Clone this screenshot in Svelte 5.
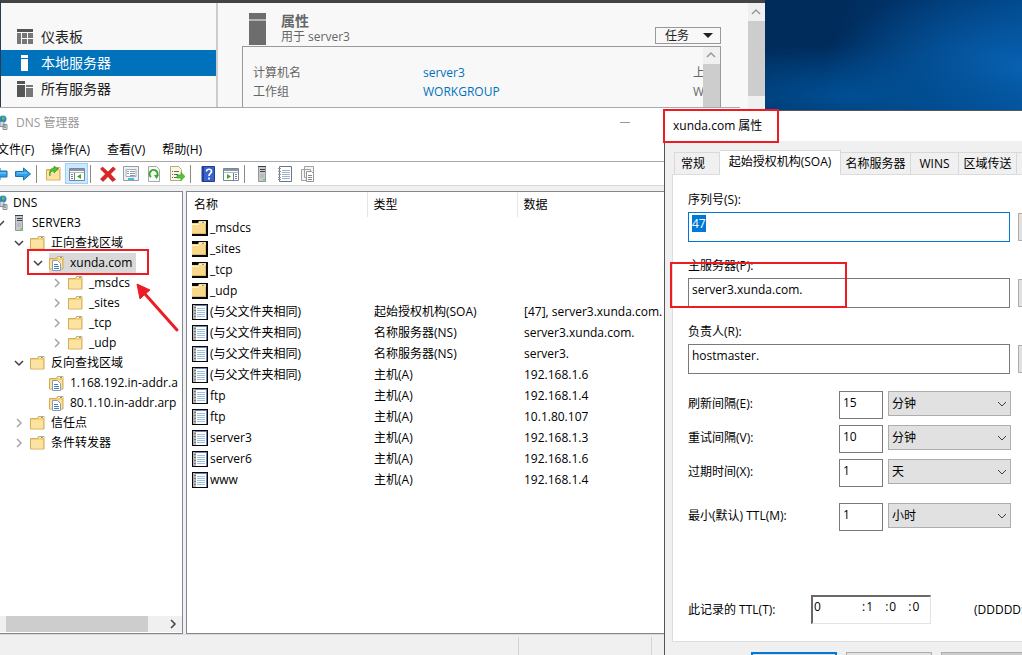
<script lang="ts">
	import { onMount } from 'svelte';

	let serial: HTMLInputElement;

	const tree = [
		{ level: 0, icon: 'dns', name: 'DNS' },
		{ level: 1, icon: 'server', name: 'SERVER3', open: true },
		{ level: 2, icon: 'folder', name: '正向查找区域', open: true },
		{ level: 3, icon: 'zone', name: 'xunda.com', open: true, selected: true },
		{ level: 4, icon: 'folder', name: '_msdcs', open: false },
		{ level: 4, icon: 'folder', name: '_sites', open: false },
		{ level: 4, icon: 'folder', name: '_tcp', open: false },
		{ level: 4, icon: 'folder', name: '_udp', open: false },
		{ level: 2, icon: 'folder', name: '反向查找区域', open: true },
		{ level: 3, icon: 'zone', name: '1.168.192.in-addr.a' },
		{ level: 3, icon: 'zone', name: '80.1.10.in-addr.arp' },
		{ level: 2, icon: 'folder', name: '信任点', open: false },
		{ level: 2, icon: 'folder', name: '条件转发器', open: false }
	];

	const records = [
		['_msdcs', '', ''],
		['_sites', '', ''],
		['_tcp', '', ''],
		['_udp', '', ''],
		['(与父文件夹相同)', '起始授权机构(SOA)', '[47], server3.xunda.com.'],
		['(与父文件夹相同)', '名称服务器(NS)', 'server3.xunda.com.'],
		['(与父文件夹相同)', '名称服务器(NS)', 'server3.'],
		['(与父文件夹相同)', '主机(A)', '192.168.1.6'],
		['ftp', '主机(A)', '192.168.1.4'],
		['ftp', '主机(A)', '10.1.80.107'],
		['server3', '主机(A)', '192.168.1.3'],
		['server6', '主机(A)', '192.168.1.6'],
		['www', '主机(A)', '192.168.1.4']
	];

	const tools = [
		'back', 'forward', '|', 'up', 'console', '|', 'delete', 'props', 'refresh', 'export',
		'|', 'help', 'view', '|', 'server', 'book', 'copy'
	];

	const intervals = [
		{ id: 'refresh', label: '刷新间隔(E):', value: '15', unit: '分钟' },
		{ id: 'retry', label: '重试间隔(V):', value: '10', unit: '分钟' },
		{ id: 'expire', label: '过期时间(X):', value: '1', unit: '天' },
		{ id: 'minimum', label: '最小(默认) TTL(M):', value: '1', unit: '小时' }
	];

	const tabs = ['常规', '起始授权机构(SOA)', '名称服务器', 'WINS', '区域传送', ''];

	onMount(() => {
		serial.focus();
		serial.select();
	});
</script>

{#snippet icon(name: string)}
	<svg class="icon" viewBox="0 0 16 16" width="16" height="16" aria-hidden="true">
		{#if name === 'folder' || name === 'zone' || name === 'up'}
			<path d="M.5 3.500h7l1-2h5.500v12.500H.5z" fill="#f3d07c" stroke="#d3ad5c" />
			<path d="M9 2.500h5" stroke="#fff4cf" />
			<path d="M11 2.500h2" stroke="#5b9bd5" />
			<path d="M1 5h12v8.500H1z" fill="#fce3a0" />
			{#if name === 'zone'}
				<path d="M3.500 5.500h5l3 3v7h-8z" fill="#fff" stroke="#8f9bb0" />
				<path d="M5 9.500h4M5 11.500h5M5 13.500h5" stroke="#3a80c8" />
			{:else if name === 'up'}
				<path d="M4 10c0-4 1-5 4-5V7l4-4-4-3v2C4 2 3 6 4 10z" fill="#4fc22c" stroke="#238a16" stroke-width=".6" />
			{/if}
		{:else if name === 'dns'}
			<circle cx="11" cy="4" r="3.500" fill="#2e86c8" />
			<path d="M10 1l3 1.500-1 3L10 4z" fill="#52c152" />
			<path d="M8 6.500h4v5H8zM3 9.500h4v5H3zM11 9.500h4v5h-4z" fill="#d8dde2" stroke="#737d87" stroke-width=".8" />
			<path d="M4 11h2M4 12.500h2M12 11h2M12 12.500h2" stroke="#5d6770" stroke-width=".6" />
		{:else if name === 'server'}
			<path d="M4.500.5h7v15h-7z" fill="#c6cacd" stroke="#92979b" />
			<path d="M4 .5h8M6 3.500h5M6 5.500h5" stroke="#3b4146" />
			<path d="M6 9h4M6 11h4" stroke="#a8adb1" />
			<path d="M9 13h2v1.500H9z" fill="#5fe04a" />
		{:else if name === 'back'}
			<path d="M8 2v3h7v6H8v3L1 8z" fill="#2f9fe6" stroke="#1671b5" />
			<path d="M5 7h9" stroke="#8bd3fa" />
		{:else if name === 'forward'}
			<path d="M8.500 2v3.500h-8v5h8V14l7-6z" fill="#2f9fe6" stroke="#1671b5" />
			<path d="M2 7h10" stroke="#8bd3fa" />
		{:else if name === 'console' || name === 'view'}
			<path d="M.5 2.500h15v12H.5z" fill="#fff" stroke="#7b8794" />
			<path d="M1 3h14v2H1z" fill="#8a96a3" />
			<path d="M1 6.500h14" stroke="#b0b8c0" />
			{#if name === 'console'}
				<path d="M5.500 7v7M2 8.500h2M2 10.500h2M2 12.500h2" stroke="#6d8197" />
				<path d="M12 8v5L8 10.500z" fill="#35ad22" />
			{:else}
				<path d="M10.500 7v7M12 8.500h2M12 10.500h2M12 12.500h2" stroke="#6d8197" />
				<path d="M4 8v5l4-2.500z" fill="#35ad22" />
			{/if}
		{:else if name === 'delete'}
			<path d="M2.500 1L8 6l5-5 2.500 2-5 5 5 5.500-3 2L8 10.500l-5 5L.5 13l5-5-5-5z" fill="#df2522" stroke="#b31414" stroke-width=".6" />
		{:else if name === 'props'}
			<path d="M.5.5h15v14H.5z" fill="#eff2f5" stroke="#959da5" />
			<path d="M3 3.500h10v7H3z" fill="#fff" stroke="#a4adb5" />
			<path d="M4 5.500h2M7 5.500h5M4 7.500h2M7 7.500h5M7 9.500h5" stroke="#8c9aa8" />
			<path d="M5 12h6v2H5z" fill="#48b7e5" />
		{:else if name === 'refresh'}
			<path d="M2.500.5h8l3 3v12h-11z" fill="#fafafa" stroke="#a8a8a8" />
			<path d="M5 11a4 4 0 1 1 6-1" fill="none" stroke="#36a92a" stroke-width="2" />
			<path d="M8 9h5l-2.500 4z" fill="#36a92a" />
		{:else if name === 'export'}
			<path d="M1.500.5h8l3 3v11h-11z" fill="#fdf7dc" stroke="#b4aa83" />
			<path d="M3 5.500h1M5 5.500h5M3 8.500h1M5 8.500h4M3 11.500h1M5 11.500h4" stroke="#56667a" />
			<path d="M8 9h4V6.500l4 4-4 4V12H8z" fill="#50c932" stroke="#2a9020" stroke-width=".6" />
		{:else if name === 'help'}
			<path d="M2 .5h12.500v15H2z" fill="#3a62cf" stroke="#1f3b92" />
			<path d="M2 1h2v14H2z" fill="#243f9d" />
			<path d="M6.500 5.500c0-3 5-3 5 0 0 2-2.500 2-2.500 4.500M9 11.500v2" fill="none" stroke="#fff" stroke-width="1.700" />
		{:else if name === 'book'}
			<path d="M2.500.5h12v15h-12z" fill="#fff" stroke="#6b7490" />
			<path d="M1 2.500h3M1 5.500h3M1 8.500h3M1 11.500h3M1 13.500h3" stroke="#999" />
			<path d="M5 4.500h8M5 6.500h8M5 8.500h8M5 10.500h8M5 12.500h8" stroke="#9fb4c8" />
		{:else if name === 'record'}
			<path d="M0 0h16v16H0z" fill="#080808" />
			<path d="M1 1h3v14H1z" fill="#b5b5b5" />
			<path d="M4 1h10v14H4z" fill="#fff" />
			<path d="M3 1.500h11M14.500 1v14" stroke="#6f82b8" />
			<path d="M5 4.500h8M5 6.500h8M5 8.500h8M5 10.500h8M5 12.500h8" stroke="#9cc2dc" />
			<path d="M2 3.500h2M2 6.500h2M2 9.500h2M2 12.500h2" stroke="#777" />
		{:else if name === 'blackfolder'}
			<path d="M0 0h16v16H0z" fill="#080808" />
			<path d="M0 3h6l1-2h7v13H0z" fill="#f8d989" />
			<path d="M7 2.500h6M0 4.500h7" stroke="#fff2c8" />
			<path d="M10 2.500h2" stroke="#5b9bd5" />
			<path d="M13.500 4v10M0 13.500h14" stroke="#e0b868" />
		{:else if name === 'copy'}
			<path d="M4.500.5h9v11h-9zM1.500 3.500h9v11h-9z" fill="#f4f4f4" stroke="#a2a2a2" />
			<path d="M6.500 5.500h5l2 2v8h-7z" fill="#fff" stroke="#959595" />
			<path d="M8 9.500h4M8 11.500h4M8 13.500h4" stroke="#888" />
		{:else if name === 'dashboard'}
			<path d="M0 0h16v3H0z" fill="#555" />
			<path d="M0 4h4v11H0zM5 4h5v5H5zM11 4h5v5h-5zM5 10h5v5H5zM11 10h5v5h-5z" fill="#777" />
		{:else if name === 'local'}
			<path d="M4 0h7v3H4zM4 4h7v12H4z" fill="#fff" />
		{:else if name === 'all'}
			<path d="M0 0h8v3H0zM0 4h8v12H0z" fill="#555" />
			<path d="M9 4h7v2H9zM9 7h7v9H9z" fill="#777" />
		{/if}
	</svg>
{/snippet}

{#snippet chevron(dir: 'up' | 'down' | 'right')}
	<svg class="chevron {dir}" viewBox="0 0 16 16" width="16" height="16" aria-hidden="true">
		{#if dir === 'up'}
			<path d="M4 10l4-4 4 4" />
		{:else if dir === 'down'}
			<path d="M4 6l4 4 4-4" />
		{:else}
			<path d="M6 4l4 4-4 4" />
		{/if}
	</svg>
{/snippet}

<main class="desktop">
	<section class="manager">
		<nav>
			<a href="#dashboard">{@render icon('dashboard')}仪表板</a>
			<a href="#local" class="current">{@render icon('local')}本地服务器</a>
			<a href="#all">{@render icon('all')}所有服务器</a>
		</nav>
		<div class="content">
			<header>
				<svg viewBox="0 0 17 32" width="17" height="32" aria-hidden="true">
					<path d="M0 0h17v6H0zM0 8h17v24H0z" fill="#6d6d6d" />
					<path d="M0 6h17v2H0z" fill="#b5b5b5" />
				</svg>
				<div class="heading">
					<h2>属性</h2>
					<p>用于 server3</p>
				</div>
				<button class="tasks">任务
					<svg viewBox="0 0 10 5" width="10" height="5"><path d="M0 0h10L5 5z" fill="#222" /></svg>
				</button>
			</header>
			<div class="properties">
				<dl>
					<dt>计算机名</dt><dd>server3</dd><dt>上</dt>
					<dt>工作组</dt><dd>WORKGROUP</dd><dt>W</dt>
				</dl>
				<div class="vscroll">{@render chevron('up')}<span></span></div>
			</div>
		</div>
		<div class="vscroll page">{@render chevron('up')}<span></span></div>
	</section>

	<section class="dns">
		<div class="title">
			{@render icon('dns')}
			<span>DNS 管理器</span>
			<button class="minimize" aria-label="最小化"></button>
		</div>
		<div class="menu">
			<button>文件(F)</button>
			<button>操作(A)</button>
			<button>查看(V)</button>
			<button>帮助(H)</button>
		</div>
		<div class="toolbar">
			{#each tools as tool}
				{#if tool === '|'}
					<i></i>
				{:else}
					<button class:pressed={tool === 'console'} aria-label={tool}>{@render icon(tool)}</button>
				{/if}
			{/each}
		</div>
		<div class="panes">
			<div class="tree">
				<ul>
					{#each tree as node}
						<li style="padding-left: {node.level * 19}px">
							<span class="twisty">
								{#if node.open !== undefined}
									{@render chevron(node.open ? 'down' : 'right')}
								{/if}
							</span>
							<button class:selected={node.selected}>
								{@render icon(node.icon)}<span>{node.name}</span>
							</button>
							{#if node.selected}
								<span class="mark zone-mark"></span>
								<svg class="arrow" viewBox="0 0 44 50" width="44" height="50" aria-hidden="true">
									<path d="M41 47L9 11" stroke="#ed1c24" stroke-width="3" stroke-linecap="round" />
									<path d="M1 1l3 15 4-4 6-5z" fill="#ed1c24" stroke="#ed1c24" />
								</svg>
							{/if}
						</li>
					{/each}
				</ul>
				<div class="hscroll"><span></span>{@render chevron('right')}</div>
			</div>
			<div class="list">
				<table>
					<thead>
						<tr><th>名称</th><th>类型</th><th>数据</th></tr>
					</thead>
					<tbody>
						{#each records as [name, type, data]}
							<tr>
								<td><div>{@render icon(type ? 'record' : 'blackfolder')}{name}</div></td>
								<td>{type}</td>
								<td>{data}</td>
							</tr>
						{/each}
					</tbody>
				</table>
			</div>
		</div>
		<footer><span></span><span></span><span></span></footer>
	</section>

	<section class="dialog">
		<h1>xunda.com 属性<span class="mark title-mark"></span></h1>
		<div class="tabs" role="tablist">
			{#each tabs as tab, i}
				<button role="tab" aria-selected={i === 1} class:active={i === 1}>{tab}</button>
			{/each}
		</div>
		<div class="sheet">
			<div class="field">
				<label for="serial">序列号(S):</label>
				<div><input id="serial" bind:this={serial} value="47" /><button aria-label="增量"></button></div>
			</div>
			<div class="field">
				<label for="primary">主服务器(P):</label>
				<div><input id="primary" value="server3.xunda.com." /><button aria-label="浏览服务器"></button></div>
				<span class="mark primary-mark"></span>
			</div>
			<div class="field">
				<label for="person">负责人(R):</label>
				<div><input id="person" value="hostmaster." /><button aria-label="浏览负责人"></button></div>
			</div>
			<div class="intervals">
				{#each intervals as row}
					<div class="interval">
						<label for={row.id}>{row.label}</label>
						<input id={row.id} value={row.value} />
						<div class="select">
							<select aria-label="{row.label} 单位"><option>{row.unit}</option></select>
							{@render chevron('down')}
						</div>
					</div>
				{/each}
			</div>
			<div class="ttl">
				<label for="days">此记录的 TTL(T):</label>
				<div class="duration">
					<input id="days" class="days" value="0" />:<input aria-label="小时" value="1" />:<input aria-label="分" value="0" />:<input aria-label="秒" value="0" />
				</div>
				<span>(DDDDD:HH.MM.SS)</span>
			</div>
		</div>
		<div class="actions">
			<button class="default" aria-label="确定"></button>
			<button aria-label="取消"></button>
			<button aria-label="应用" disabled></button>
		</div>
	</section>
</main>

<style>
	:global(body) {
		overflow: hidden;
	}
	.desktop {
		position: relative;
		min-height: 100vh;
		overflow: hidden;
		font: 12px/16px 'Open Sans', 'Noto Sans CJK SC', sans-serif;
		color: #000;
		background:
			radial-gradient(ellipse 220px 50px at 850px 95px, #004f94, transparent),
			radial-gradient(ellipse 200px 90px at 1022px 70px, #0862b2, transparent),
			linear-gradient(100deg, #002c5c 74%, #004080 88%, #0055a0);
	}
	.desktop * {
		box-sizing: border-box;
	}
	button,
	input,
	select {
		font: inherit;
		color: inherit;
		margin: 0;
		padding: 0;
		border: 0;
		border-radius: 0;
		background: none;
		outline: none;
	}
	h1,
	h2,
	p,
	ul,
	dl,
	dd {
		margin: 0;
		padding: 0;
	}
	svg {
		display: block;
		flex: none;
	}
	.chevron path {
		fill: none;
		stroke: #404040;
		stroke-width: 1.5;
	}
	.mark {
		position: absolute;
		z-index: 2;
		border: 2px solid #ed1c24;
		pointer-events: none;
	}

	/* server manager */
	.manager {
		position: absolute;
		top: 0;
		left: 0;
		right: 257px;
		height: 140px;
		display: flex;
		border-top: 3px solid #444;
		border-left: 1px solid #2b3a4c;
		background: #f8f8f8;
		overflow: hidden;
	}
	nav {
		flex: none;
		width: 217px;
		padding-top: 21px;
		border-right: 2px solid #ccc;
		font-size: 14px;
	}
	nav a {
		display: flex;
		align-items: center;
		gap: 8px;
		height: 26px;
		padding-left: 16px;
		color: #222;
		text-decoration: none;
	}
	nav .current {
		color: #fff;
		background: #0072bc;
	}
	.content {
		flex: 1;
		display: flex;
		flex-direction: column;
		padding: 10px 27px 0 24px;
		color: #666;
	}
	header {
		display: flex;
		align-items: flex-start;
		height: 34px;
		padding-left: 7px;
	}
	.heading {
		flex: 1;
		padding-left: 15px;
	}
	h2 {
		font-size: 14px;
		line-height: 16px;
	}
	.tasks {
		display: flex;
		align-items: center;
		justify-content: space-between;
		width: 66px;
		height: 17px;
		margin-top: 14px;
		padding: 0 7px 0 9px;
		border: 1px solid #999;
		color: #222;
	}
	.properties {
		flex: 1;
		display: flex;
		border: 1px solid #999;
	}
	dl {
		flex: 1;
		width: 0;
		display: grid;
		grid-template-columns: 170px 270px 20px;
		align-content: start;
		line-height: 19px;
		padding: 16px 0 0 10px;
		overflow: hidden;
	}
	dd {
		color: #0072bc;
	}
	.vscroll {
		display: flex;
		flex-direction: column;
		flex: none;
		width: 17px;
		background: #f0f0f0;
	}
	.vscroll span {
		height: 75px;
		background: #cdcdcd;
	}
	.vscroll .chevron {
		margin-bottom: 1px;
	}
	.page {
		padding-top: 1px;
	}
	.up path {
		stroke: #999;
	}

	/* dns console */
	.dns {
		position: absolute;
		top: 107px;
		bottom: 0;
		left: -28px;
		right: 282px;
		display: flex;
		flex-direction: column;
		border-top: 1px solid #aaa;
		background: #fff;
	}
	.title {
		display: flex;
		align-items: center;
		gap: 8px;
		height: 29px;
		padding-left: 20px;
		color: #999;
	}
	.minimize {
		margin-left: auto;
		margin-right: 92px;
		width: 46px;
		height: 29px;
	}
	.minimize::before {
		content: '';
		display: block;
		width: 10px;
		height: 1px;
		margin: 0 auto;
		background: #999;
	}
	.menu {
		display: flex;
		gap: 17px;
		height: 25px;
		padding: 2px 0 0 25px;
		border-bottom: 1px solid #a8a8b0;
	}
	.toolbar {
		display: flex;
		align-items: center;
		height: 24px;
		padding-left: 16px;
		border-bottom: 1px solid #d8d8d8;
	}
	.toolbar button {
		display: grid;
		place-items: center;
		width: 23px;
		height: 21px;
	}
	.toolbar .pressed {
		border: 1px solid #99d1ff;
		background: #cce8ff;
	}
	.toolbar i {
		width: 1px;
		height: 18px;
		margin: 0 5px 0 2px;
		background: #8a8a8a;
	}
	.panes {
		flex: 1;
		display: flex;
		gap: 3px;
		min-height: 0;
		padding-top: 5px;
		background: #f0f0f0;
	}
	.tree,
	.list {
		border: 1px solid #828790;
		background: #fff;
	}
	.tree {
		flex: none;
		display: flex;
		flex-direction: column;
		width: 211px;
	}
	.tree ul {
		flex: 1;
		padding-top: 1px;
		list-style: none;
	}
	.tree li {
		position: relative;
		display: flex;
		align-items: center;
		height: 20px;
		white-space: nowrap;
	}
	.tree li > button {
		display: flex;
		align-items: center;
		height: 20px;
		margin-left: 1px;
	}
	.tree li > button span {
		padding: 0 4px 0 5px;
		line-height: 20px;
	}
	.tree .selected {
		background: #d9d9d9;
	}
	.twisty {
		flex: none;
		width: 18px;
	}
	.twisty .right path {
		stroke: #a6a6a6;
	}
	.zone-mark {
		top: -4px;
		left: 54px;
		width: 122px;
		height: 26px;
	}
	.arrow {
		position: absolute;
		z-index: 2;
		top: 30px;
		left: 163px;
	}
	.hscroll {
		display: flex;
		justify-content: space-between;
		align-items: center;
		height: 16px;
		margin-bottom: 1px;
		padding: 0 1px 0 33px;
		background: #f0f0f0;
	}
	.hscroll span {
		width: 142px;
		height: 16px;
		background: #cdcdcd;
	}
	.list {
		flex: 1;
		min-width: 0;
		overflow: hidden;
	}
	table {
		width: 100%;
		table-layout: fixed;
		border-collapse: collapse;
		white-space: nowrap;
	}
	th {
		height: 25px;
		padding: 0 0 0 6px;
		border-right: 1px solid #e5e5e5;
		font-weight: normal;
		text-align: left;
	}
	th:first-child {
		width: 180px;
		padding-left: 7px;
	}
	th:nth-child(2) {
		width: 150px;
	}
	td {
		height: 21px;
		padding: 0 0 0 7px;
	}
	td:first-child {
		padding-left: 5px;
	}
	td div {
		display: flex;
		align-items: center;
		gap: 2px;
	}
	footer {
		display: flex;
		height: 21px;
		border-top: 1px solid #d8d8d8;
		background: #f0f0f0;
	}
	footer span {
		width: 133px;
		margin-top: 2px;
		border-right: 1px solid #d4d4d4;
	}
	footer span:first-child {
		flex: 1;
	}
	footer span:last-child {
		width: 88px;
	}

	/* zone properties */
	.dialog {
		position: absolute;
		top: 110px;
		left: 664px;
		right: -110px;
		bottom: -32px;
		display: flex;
		flex-direction: column;
		border: 1px solid #555;
		background: #f0f0f0;
	}
	h1 {
		position: relative;
		padding: 7px 8px;
		font-size: 12px;
		font-weight: normal;
		background: #fff;
	}
	.title-mark {
		top: -2px;
		left: -2px;
		width: 116px;
		height: 34px;
	}
	.tabs {
		display: flex;
		align-items: flex-end;
		height: 33px;
		padding-left: 9px;
	}
	.tabs button {
		flex: none;
		width: 58px;
		height: 22px;
		border: 1px solid #d9d9d9;
		border-width: 1px 1px 0 0;
	}
	.tabs button:first-child {
		width: 46px;
		padding-right: 8px;
		border-left-width: 1px;
	}
	.tabs button:nth-child(3) {
		width: 70px;
	}
	.tabs button:nth-child(4) {
		width: 48px;
	}
	.tabs .active {
		z-index: 1;
		width: 121px;
		height: 25px;
		margin-bottom: -1px;
		padding-bottom: 2px;
		background: #fff;
	}
	.sheet {
		flex: 1;
		margin: 0 8px 0 7px;
		padding: 17px 15px 0;
		border: 1px solid #dcdcdc;
		background: #fff;
	}
	.field {
		position: relative;
		margin-bottom: 16px;
	}
	.field label {
		display: block;
	}
	.field div {
		display: flex;
		align-items: center;
		gap: 8px;
		margin-top: 4px;
	}
	input {
		height: 28px;
		padding: 0 3px 5px;
		border: 1px solid #7a7a7a;
	}
	.field input {
		flex: 1;
		height: 30px;
		padding-bottom: 8px;
	}
	input:focus {
		border-color: #0078d7;
	}
	input::selection {
		color: #fff;
		background: #0078d7;
	}
	.field button {
		width: 89px;
		height: 28px;
		border: 1px solid #adadad;
		background: #e1e1e1;
	}
	.primary-mark {
		top: 4px;
		left: -18px;
		width: 177px;
		height: 46px;
	}
	.intervals {
		display: flex;
		flex-direction: column;
		gap: 6px;
		margin-top: 17px;
	}
	.interval {
		display: flex;
		align-items: flex-start;
		gap: 5px;
	}
	.interval:last-child {
		margin-top: 10px;
	}
	.interval label {
		width: 146px;
		line-height: 26px;
	}
	.interval input {
		width: 44px;
	}
	.select {
		position: relative;
		width: 123px;
	}
	select {
		appearance: none;
		width: 100%;
		height: 25px;
		padding: 0 3px;
		border: 1px solid #adadad;
		background: #e1e1e1;
	}
	.select .chevron {
		position: absolute;
		top: 5px;
		right: 1px;
		pointer-events: none;
	}
	.select path {
		stroke-width: 1;
	}
	.ttl {
		display: flex;
		align-items: center;
		margin-top: 64px;
		white-space: nowrap;
	}
	.ttl label {
		width: 123px;
	}
	.duration {
		display: flex;
		width: 120px;
		height: 29px;
		margin-right: 43px;
		padding-top: 2px;
		border: 1px solid #e3e3e3;
		border-top: 2px solid #696969;
		border-left: 2px solid #696969;
	}
	.duration input {
		width: 20px;
		height: 16px;
		padding: 0 1px;
		border: 0;
	}
	.duration .days {
		width: 49px;
	}
	.actions {
		display: flex;
		justify-content: flex-end;
		gap: 9px;
		height: 44px;
		padding: 10px 104px 0 0;
	}
	.actions button {
		width: 86px;
		height: 26px;
		border: 1px solid #adadad;
		background: #e1e1e1;
	}
	.actions .default {
		border: 2px solid #0078d7;
	}
	.actions button:disabled {
		background: #ccc;
	}
</style>
